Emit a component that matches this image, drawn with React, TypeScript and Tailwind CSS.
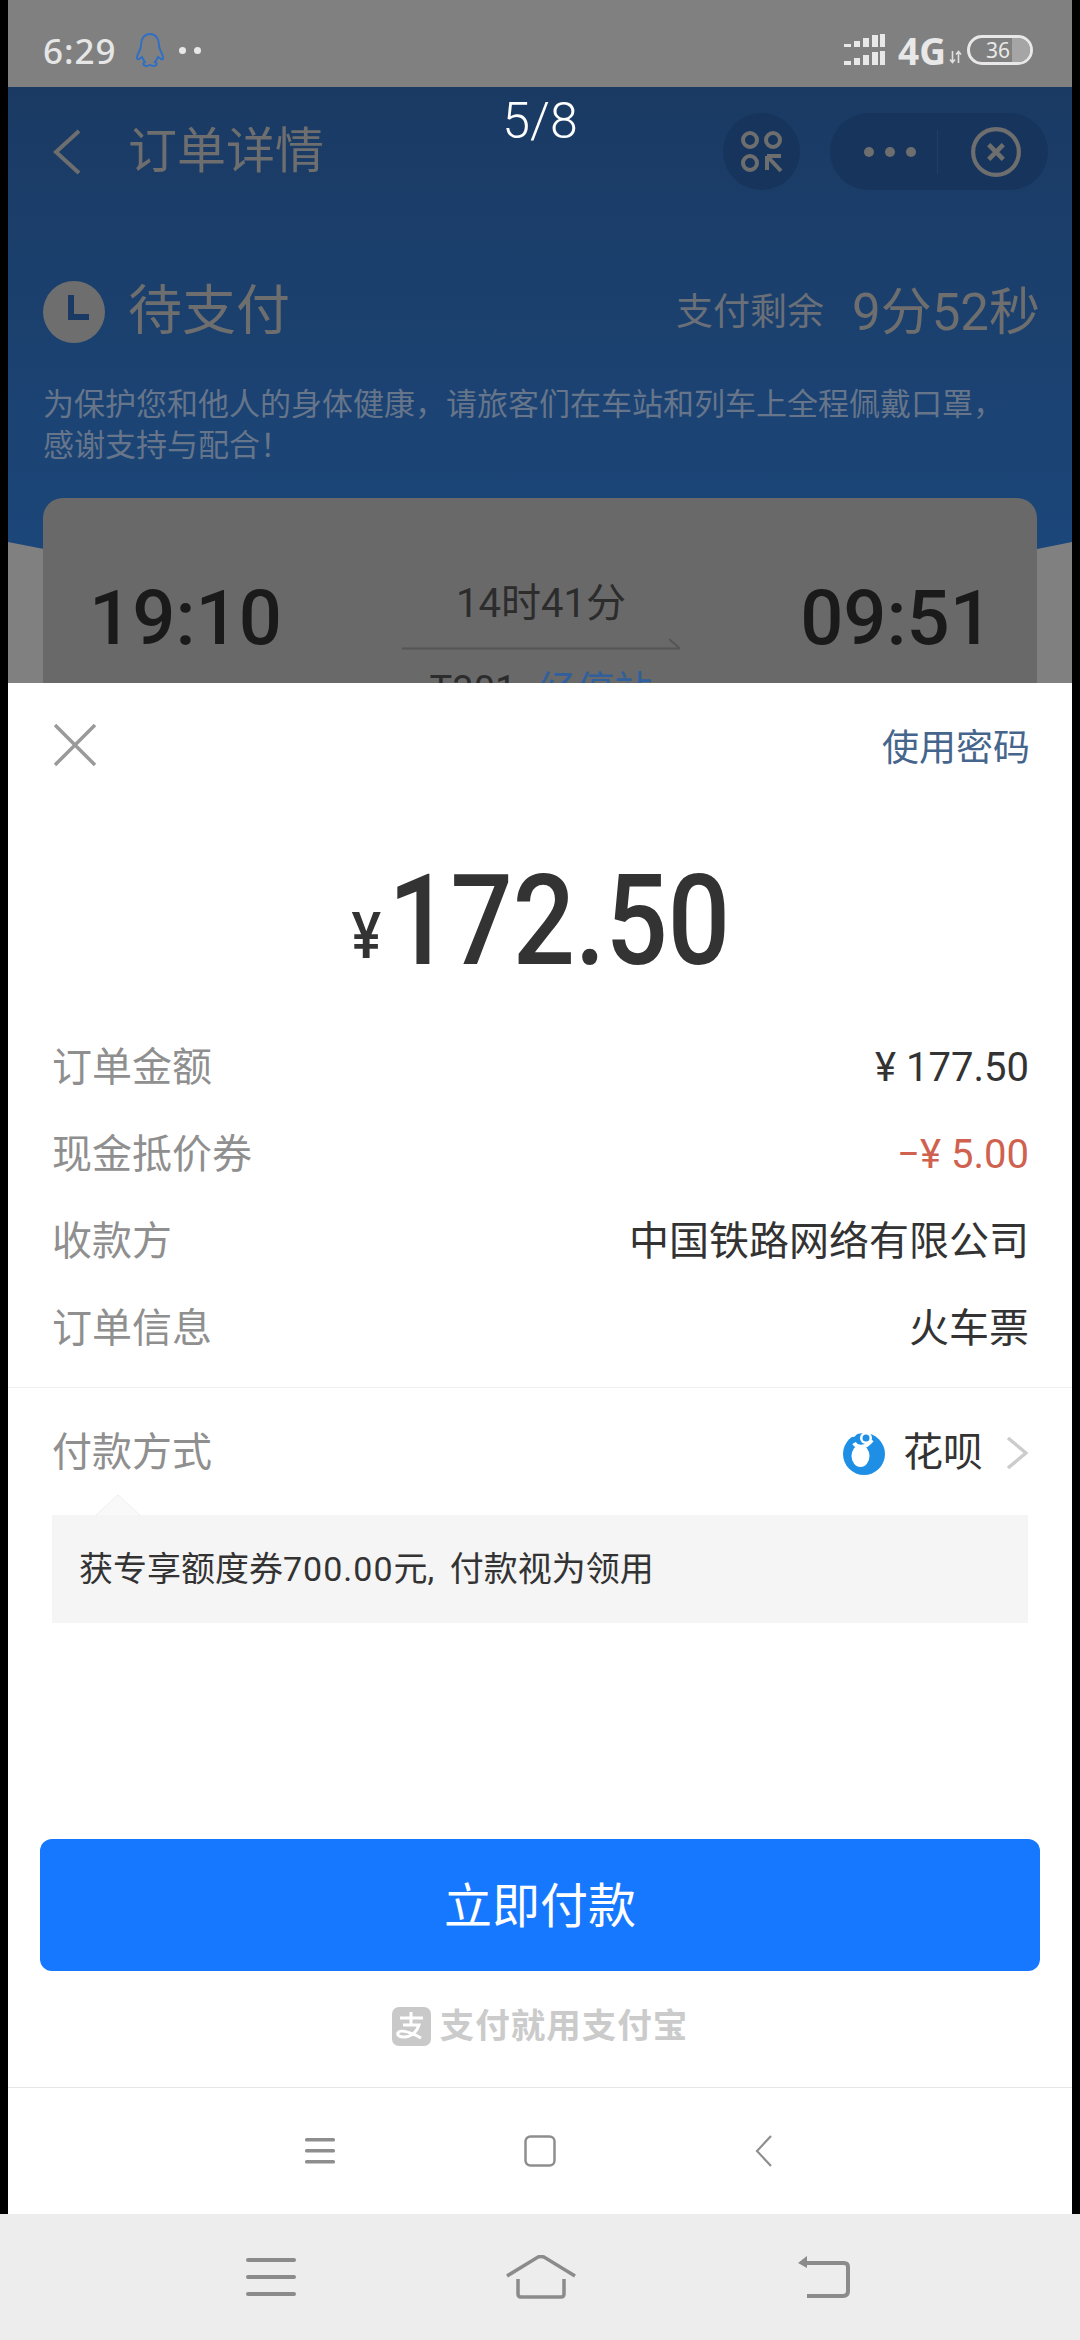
const cjk = "font-['Roboto','Noto_Sans_CJK_SC',sans-serif]";

function StatusBar() {
  return (
    <div className="flex h-[87px] items-center justify-between bg-[#808080] pl-[35px] pr-[39px] pt-[13px]">
      <div className="flex items-center">
        <span className="text-[35px] font-medium leading-none tracking-[1px] text-[#e6e6e6]">6:29</span>
        <svg className="ml-[18px] h-[36px] w-[30px]" viewBox="2 0 28 36" fill="none" stroke="#2f6fc4" strokeWidth="2">
          <path d="M16 2c-6 0-9 5-9 11 0 3-1 5-3 9-2 4-1 6 1 5l3-2c1 2 2 4 3 5-2 1-3 3 1 4 2 0 3-1 4-1s2 1 4 1c4-1 3-3 1-4 1-1 2-3 3-5l3 2c2 1 3-1 1-5-2-4-3-6-3-9 0-6-3-11-9-11z" />
        </svg>
        <span className="ml-[14px] h-[7px] w-[7px] rounded-full bg-[#e8e8e8]" />
        <span className="ml-[8px] h-[7px] w-[7px] rounded-full bg-[#e8e8e8]" />
      </div>
      <div className="flex items-center">
        <svg className="h-[32px] w-[41px]" viewBox="0 0 41 32" fill="#e8e8e8">
          <rect x="0" y="10" width="7" height="3" />
          <rect x="10" y="7" width="6" height="6" />
          <rect x="19" y="4" width="6" height="9" />
          <rect x="28" y="1" width="6" height="12" />
          <rect x="36" y="0" width="5" height="13" />
          <rect x="0" y="27" width="7" height="4" />
          <rect x="10" y="24" width="6" height="7" />
          <rect x="19" y="21" width="6" height="10" />
          <rect x="28" y="18" width="6" height="13" />
          <rect x="36" y="17" width="5" height="14" />
        </svg>
        <span className="ml-[13px] text-[37px] font-bold leading-none text-[#e8e8e8]">4G</span>
        <svg className="ml-[3px] mt-[14px] h-[14px] w-[13px]" viewBox="0 0 13 14" fill="none" stroke="#e0e0e0" strokeWidth="1.6">
          <path d="M3.5 1v11M1 9.5l2.5 3 2.5-3M9.5 13V2M7 4.5l2.5-3 2.5 3" />
        </svg>
        <div className="relative ml-[5px] flex h-[30px] w-[66px] items-center overflow-hidden rounded-full border-[3px] border-[#e8e8e8]">
          <div className="h-full w-[42px] bg-transparent" />
          <div className="h-full flex-1 bg-[#a5a5a5]" />
          <span className="absolute inset-0 flex items-center justify-center pr-[4px] text-[21px] leading-none text-[#e8e8e8]">36</span>
        </div>
      </div>
    </div>
  );
}

function TicketBackdrop() {
  return (
    <div className={`relative h-[596px] overflow-hidden bg-[linear-gradient(#1a3a63,#1c4a80)] ${cjk}`}>
      {/* grey wave behind the ticket card */}
      <svg className="absolute bottom-0 left-0 h-[141px] w-full" viewBox="0 0 1064 141" preserveAspectRatio="none">
        <path d="M0 0Q532 110 1064 0V141H0z" fill="#808080" />
      </svg>
      <span className="absolute left-0 right-0 top-[4px] text-center text-[50px] font-light leading-[1.2] text-white">5/8</span>

      <div className="relative flex items-center px-[15px] pt-[26px]">
        <div className="flex h-[77px] flex-1 items-center">
          <svg className="ml-[29px] h-[46px] w-[30px]" viewBox="0 0 30 46" fill="none" stroke="#6e6e6e" strokeWidth="4">
            <path d="M27 2L4 23l23 21" />
          </svg>
          <span className="ml-[46px] text-[49px] leading-none text-[#6e6e6e]">订单详情</span>
        </div>
        <div className="flex h-[77px] w-[77px] items-center justify-center rounded-full bg-[#17355c]">
          <svg className="h-[44px] w-[44px]" viewBox="0 0 44 44" fill="none" stroke="#6e6e6e" strokeWidth="4">
            <circle cx="10" cy="10" r="7" />
            <circle cx="33" cy="10" r="7" />
            <circle cx="10" cy="33" r="7" />
            <path d="M27 26h14M27 26v14M27 26l14 15" />
          </svg>
        </div>
        <div className="ml-[30px] mr-[9px] flex h-[77px] w-[218px] items-center rounded-full bg-[#17355c]">
          <div className="flex flex-1 items-center justify-center gap-[11px] pl-[12px]">
            <span className="h-[10px] w-[10px] rounded-full bg-[#6e6e6e]" />
            <span className="h-[10px] w-[10px] rounded-full bg-[#6e6e6e]" />
            <span className="h-[10px] w-[10px] rounded-full bg-[#6e6e6e]" />
          </div>
          <div className="h-[44px] w-px bg-[#1e3f69]" />
          <div className="flex w-[110px] items-center justify-center pl-[5px]">
            <svg className="h-[52px] w-[52px]" viewBox="0 0 50 50" fill="none" stroke="#6e6e6e" strokeWidth="4">
              <circle cx="25" cy="25" r="22" />
              <path d="M18 18l14 14M32 18L18 32" strokeWidth="4.5" />
            </svg>
          </div>
        </div>
      </div>

      <div className="relative mt-[91px] flex items-center pl-[35px] pr-[32px]">
        <svg className="h-[62px] w-[62px]" viewBox="0 0 62 62">
          <circle cx="31" cy="31" r="31" fill="#6e6e6e" />
          <path d="M28 14v22h18" fill="none" stroke="#1a3a63" strokeWidth="6" />
        </svg>
        <span className="ml-[23px] flex-1 text-[54px] leading-none text-[#6e6e6e]">待支付</span>
        <span className="text-[37px] leading-none text-[#6a6f78]">支付剩余</span>
        <span className="ml-[28px] text-[51px] leading-none text-[#6e6e6e]">9分52秒</span>
      </div>

      <p className="relative mt-[41px] pl-[35px] text-[31px] leading-[41px] text-[#66758a]">
        为保护您和他人的身体健康，请旅客们在车站和列车上全程佩戴口罩，
        <br />
        感谢支持与配合！
      </p>

      <div className="relative mx-[35px] mt-[32px] h-[300px] rounded-t-[20px] bg-[#696969] pt-[82px]">
        <div className="flex items-start justify-between pl-[46px] pr-[44px]">
          <span className="text-[76px] font-medium leading-[76px] text-[#1a1a1a]">19:10</span>
          <div className="flex w-[278px] flex-col items-center">
            <span className="text-[40px] leading-[48px] text-[#2c2c2c]">14时41分</span>
            <svg className="mt-[10px] h-[12px] w-[278px]" viewBox="0 0 278 12" fill="none" stroke="#555" strokeWidth="2">
              <path d="M0 10.5h278L267 1" />
            </svg>
            {/* cut off by the pay sheet, as in the screen */}
            <span className="mt-[18px] whitespace-nowrap text-[38px] leading-[44px] text-[#2c2c2c]">
              T301
              <span className="ml-[22px] text-[#2f5f9c]">经停站</span>
            </span>
          </div>
          <span className="text-[76px] font-medium leading-[76px] text-[#1a1a1a]">09:51</span>
        </div>
      </div>
    </div>
  );
}

function InfoRow({ label, value, valueClass }: { label: string; value: string; valueClass?: string }) {
  return (
    <div className="flex h-[87px] items-center justify-between">
      <span className="text-[40px] leading-none text-[#8f8f8f]">{label}</span>
      <span className={`text-[40px] leading-none ${valueClass ?? "text-[#333333]"}`}>{value}</span>
    </div>
  );
}

function PaySheet() {
  return (
    <div className={`flex h-[1531px] flex-col bg-white ${cjk}`}>
      <div className="flex h-[124px] items-center justify-between pl-[46px] pr-[42px]">
        <svg className="h-[42px] w-[42px]" viewBox="0 0 42 42" fill="none" stroke="#9a9a9a" strokeWidth="3.5">
          <path d="M1 1l40 40M41 1L1 41" />
        </svg>
        <span className="mt-[6px] text-[37px] leading-none text-[#46658c]">使用密码</span>
      </div>

      <div className="mt-[52px] flex scale-x-[0.87] items-end justify-center pl-[2px]">
        <span className="mb-[14px] text-[64px] font-medium leading-none text-[#333333]">¥</span>
        <span className="ml-[8px] text-[126px] font-medium leading-[124px] text-[#333333]">172.50</span>
      </div>

      <div className="mt-[41px] pl-[44px] pr-[43px]">
        <InfoRow label="订单金额" value="¥ 177.50" />
        <InfoRow label="现金抵价券" value="−¥ 5.00" valueClass="text-[#d0614f]" />
        <InfoRow label="收款方" value="中国铁路网络有限公司" />
        <InfoRow label="订单信息" value="火车票" />
      </div>

      <div className="mt-[15px] h-px bg-[#efefef]" />

      <div className="flex h-[127px] items-center justify-between pl-[44px] pr-[44px] pt-[2px]">
        <span className="text-[40px] leading-none text-[#8f8f8f]">付款方式</span>
        <div className="flex items-center">
          <svg className="h-[44px] w-[44px]" viewBox="0 0 44 44">
            <circle cx="22" cy="23" r="21" fill="#1f8fe6" />
            <path d="M-1-1H17C15 4 13 6 11 6 8 5 5 6 3 9H-1z" fill="#fff" />
            <ellipse cx="18.5" cy="25" rx="9" ry="11" fill="#fff" />
            <path d="M12 12c3 5 11 6 18-3" fill="none" stroke="#fff" strokeWidth="4" />
            <circle cx="24" cy="7" r="6" fill="#fff" />
            <circle cx="24" cy="7" r="3.5" fill="#1f8fe6" />
          </svg>
          <span className="ml-[17px] text-[40px] leading-none text-[#333333]">花呗</span>
          <svg className="ml-[23px] h-[34px] w-[22px]" viewBox="0 0 22 34" fill="none" stroke="#cccccc" strokeWidth="3.5">
            <path d="M2 2l18 15L2 32" />
          </svg>
        </div>
      </div>

      <div className="relative mx-[44px] flex h-[108px] items-center whitespace-pre bg-[#f5f5f5] pl-[27px] text-[34px] text-[#333333]">
        {/* little pointer up to the pay method label */}
        <svg className="absolute left-[44px] top-[-20px] h-[20px] w-[44px]" viewBox="0 0 44 20" fill="#f9f9f9" stroke="#efefef">
          <path d="M0 20L22 0l22 20" />
        </svg>
        获专享额度券<span className="tracking-[1px]">700.00</span>元<span className="mr-[7px]">, </span>付款视为领用
      </div>

      <div className="mx-[32px] mt-[216px] flex h-[132px] items-center justify-center rounded-[12px] bg-[#1677ff] pt-[3px] text-[48px] text-white">
        立即付款
      </div>

      <div className="mt-[35px] flex h-[40px] items-center justify-center">
        <svg className="h-[39px] w-[39px]" viewBox="0 0 39 39">
          <rect width="39" height="39" rx="7" fill="#c9c9c9" />
          <path d="M8 11h23M19 5v12M11 18h16c-2 7-8 12-15 12-5 0-7-2-6-4 1-3 9-3 23 5" fill="none" stroke="#fff" strokeWidth="3" />
        </svg>
        <span className="ml-[9px] text-[34.5px] font-bold leading-none tracking-[1px] text-[#cbcbcb]">支付就用支付宝</span>
      </div>

      <div className="mt-[41px] h-px bg-[#e6e6e6]" />

      <div className="flex flex-1 items-center">
        <div className="flex w-[516px] justify-end">
          <svg className="mr-[189px] h-[26px] w-[30px]" viewBox="0 0 30 26" fill="#8e8e8e">
            <rect y="0" width="30" height="3.5" rx="1.5" />
            <rect y="11" width="30" height="3.5" rx="1.5" />
            <rect y="22" width="30" height="3.5" rx="1.5" />
          </svg>
        </div>
        <svg className="h-[32px] w-[32px]" viewBox="0 0 32 32" fill="none" stroke="#8e8e8e" strokeWidth="2.5">
          <rect x="1.5" y="1.5" width="29" height="29" rx="5" />
        </svg>
        <svg className="ml-[199px] h-[32px] w-[17px]" viewBox="0 0 17 32" fill="none" stroke="#8e8e8e" strokeWidth="2.2">
          <path d="M16 1L2 16l14 15" />
        </svg>
      </div>
    </div>
  );
}

function SystemNav() {
  return (
    <div className="flex h-[126px] items-center bg-[#ededed] pl-[246px]">
      <svg className="h-[38px] w-[50px]" viewBox="0 0 50 38" fill="#8b8b8b">
        <rect y="0" width="50" height="4" rx="2" />
        <rect y="17" width="50" height="4" rx="2" />
        <rect y="34" width="50" height="4" rx="2" />
      </svg>
      <svg className="ml-[210px] h-[44px] w-[70px]" viewBox="0 0 70 44" fill="none" stroke="#8b8b8b" strokeWidth="3.5">
        <path d="M1 21L32 2q3-1 6 0l31 19M12 24v15q0 3 3 3h40q3 0 3-3V24" />
      </svg>
      <svg className="ml-[222px] h-[42px] w-[52px]" viewBox="0 0 52 42" fill="none" stroke="#8b8b8b" strokeWidth="4">
        <path d="M8 7h38q4 0 4 4v24q0 5-5 5H9" />
        <path d="M0 7l9-7v12z" fill="#8b8b8b" stroke="none" />
      </svg>
    </div>
  );
}

export default function App() {
  return (
    <div className="flex h-[2340px] w-[1080px] flex-col overflow-hidden bg-black">
      <div className="mx-[8px] flex flex-col">
        <StatusBar />
        <TicketBackdrop />
        <PaySheet />
      </div>
      <SystemNav />
    </div>
  );
}
